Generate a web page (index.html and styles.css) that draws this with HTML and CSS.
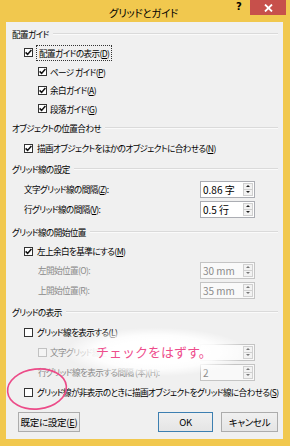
FILE: index.html
```html
<!DOCTYPE html>
<html lang="ja">
<head>
<meta charset="utf-8">
<title>グリッドとガイド</title>
<link rel="stylesheet" href="styles.css">
</head>
<body>
<div class="window">
  <div class="titlebar">
    <span class="title">グリッドとガイド</span>
    <span class="help">?</span>
    <span class="close"><svg width="9" height="8" viewBox="0 0 9 8"><path d="M1 0.5 L8 7.5 M8 0.5 L1 7.5" stroke="#fff" stroke-width="1.8"/></svg></span>
  </div>
  <div class="content">
    <div class="head h18"><span>配置ガイド</span><i class="rule"></i></div>
    <div class="row lv1 h19"><span class="box"><svg class="tick" viewBox="0 0 9 9"><path d="M1.6 4.4 L3.6 6.4 L7.4 1.9" /></svg></span><span class="focus">配置ガイドの表示(<u>D</u>)</span></div>
    <div class="row lv2 h19"><span class="box"><svg class="tick" viewBox="0 0 9 9"><path d="M1.6 4.4 L3.6 6.4 L7.4 1.9" /></svg></span><span>ページ ガイド(<u>P</u>)</span></div>
    <div class="row lv2 h18"><span class="box"><svg class="tick" viewBox="0 0 9 9"><path d="M1.6 4.4 L3.6 6.4 L7.4 1.9" /></svg></span><span>余白ガイド(<u>A</u>)</span></div>
    <div class="row lv2 h19"><span class="box"><svg class="tick" viewBox="0 0 9 9"><path d="M1.6 4.4 L3.6 6.4 L7.4 1.9" /></svg></span><span>段落ガイド(<u>G</u>)</span></div>

    <div class="head h20"><span>オブジェクトの位置合わせ</span><i class="rule"></i></div>
    <div class="row lv1 h20"><span class="box"><svg class="tick" viewBox="0 0 9 9"><path d="M1.6 4.4 L3.6 6.4 L7.4 1.9" /></svg></span><span>描画オブジェクトをほかのオブジェクトに合わせる(<u>N</u>)</span></div>

    <div class="head h21"><span>グリッド線の設定</span><i class="rule"></i></div>
    <div class="row spin lv1t h20"><span>文字グリッド線の間隔(<u>Z</u>):</span>
      <span class="input"><span class="val">0.86 字</span><span class="btns"><i class="up"></i><i class="dn"></i></span></span></div>
    <div class="row spin lv1t h20"><span>行グリッド線の間隔(<u>V</u>):</span>
      <span class="input"><span class="val">0.5 行</span><span class="btns"><i class="up"></i><i class="dn"></i></span></span></div>

    <div class="head h20 mt3"><span>グリッド線の開始位置</span><i class="rule"></i></div>
    <div class="row lv1 h18"><span class="box"><svg class="tick" viewBox="0 0 9 9"><path d="M1.6 4.4 L3.6 6.4 L7.4 1.9" /></svg></span><span>左上余白を基準にする(<u>M</u>)</span></div>
    <div class="row spin lv2t h20 dis"><span>左開始位置(O):</span>
      <span class="input"><span class="val">30 mm</span><span class="btns"><i class="up"></i><i class="dn"></i></span></span></div>
    <div class="row spin lv2t h20 dis"><span>上開始位置(R):</span>
      <span class="input"><span class="val">35 mm</span><span class="btns"><i class="up"></i><i class="dn"></i></span></span></div>

    <div class="head h20 mt2"><span>グリッドの表示</span><i class="rule"></i></div>
    <div class="row lv1 h20"><span class="box"></span><span>グリッド線を表示する(<u>L</u>)</span></div>
    <div class="row spin lv2 h20 dis"><span class="box off"></span><span>文字グリッド線を表示する間隔 (本)(I):</span>
      <span class="input"><span class="val"></span><span class="btns"><i class="up"></i><i class="dn"></i></span></span></div>
    <div class="row spin lv2t h20 dis"><span>行グリッド線を表示する間隔 (本)(H):</span>
      <span class="input"><span class="val">2</span><span class="btns"><i class="up"></i><i class="dn"></i></span></span></div>
    <div class="row lv1 h20"><span class="box"></span><span>グリッド線が非表示のときに描画オブジェクトをグリッド線に合わせる(<u>S</u>)</span></div>

    <div class="buttons">
      <span class="btn b-default">既定に設定(<u>E</u>)</span>
      <span class="btn b-ok">OK</span>
      <span class="btn b-cancel">キャンセル</span>
    </div>
  </div>

  <div class="glow"></div>
  <div class="note">チェックをはずす。</div>
  <svg class="circle" width="66" height="48" viewBox="0 0 66 48"><ellipse cx="32" cy="23" rx="29.5" ry="20" transform="rotate(-6 32 23)" fill="none" stroke="#ec4b88" stroke-width="1.6"/></svg>
</div>
</body>
</html>
```
FILE: styles.css
```css
html, body {
  margin: 0;
  padding: 0;
  background: #f1c84e;
}
body {
  font-family: "Noto Sans CJK JP", sans-serif;
  font-size: 8.6px;
  letter-spacing: -0.6px;
  font-feature-settings: "palt";
  color: #000;
}
.window {
  position: relative;
  width: 290px;
  height: 446px;
  box-sizing: border-box;
  padding: 0 7px 7px 6px;
  display: flex;
  flex-direction: column;
  background: #f1c84e;
  overflow: hidden;
}
.titlebar {
  height: 22px;
  flex: none;
  display: flex;
  align-items: center;
  justify-content: center;
  position: relative;
}
.title {
  font-size: 10.5px;
  letter-spacing: -0.3px;
  margin-top: 3px;
  margin-left: -2px;
}
.help {
  position: absolute;
  left: 230px;
  top: 1px;
  font-family: "DejaVu Sans", sans-serif;
  font-weight: bold;
  font-size: 10px;
  letter-spacing: 0;
}
.close {
  position: absolute;
  right: -3px;
  top: 0;
  width: 36px;
  height: 15px;
  background: #c7504b;
  display: flex;
  align-items: center;
  justify-content: center;
}
.content {
  flex: 1;
  background: #f0f0f0;
  padding: 3px 5px 7px 6px;
  display: flex;
  flex-direction: column;
}
.h18 { height: 18px; }
.h19 { height: 19px; }
.h20 { height: 20px; }
.h21 { height: 21px; }
.mt2 { margin-top: 2px; }
.mt3 { margin-top: 3px; }
.head {
  display: flex;
  align-items: center;
  gap: 4px;
  flex: none;
}
.rule {
  flex: 1;
  height: 1px;
  background: #dadada;
  border-bottom: 1px solid #fafafa;
}
.row {
  display: flex;
  align-items: center;
  flex: none;
  white-space: nowrap;
}
.lv1 { padding-left: 12px; gap: 4px; }
.lv2 { padding-left: 26px; gap: 3px; }
.lv1t { padding-left: 12px; }
.lv2t { padding-left: 26px; }
.box {
  width: 9px;
  height: 9px;
  box-sizing: border-box;
  border: 1px solid #333;
  background: #fff;
  flex: none;
  position: relative;
}
.box.off {
  border-color: #c2c2c2;
  background: #f4f4f4;
}
.tick {
  position: absolute;
  left: -1px;
  top: -1px;
  width: 9px;
  height: 9px;
}
.tick path {
  fill: none;
  stroke: #111;
  stroke-width: 1.5;
}
.focus {
  outline: 1px dotted #333;
  outline-offset: 1px;
  padding: 0 1px;
  margin-left: 1px;
}
u { text-decoration: underline; text-underline-offset: 1px; }
.dis { color: #8a8a8a; }
.spin .input {
  margin-left: auto;
  margin-right: 23px;
  width: 55px;
  height: 17px;
  box-sizing: border-box;
  border: 1px solid #abadb3;
  background: #fff;
  display: flex;
  align-items: center;
  flex: none;
}
.dis .input {
  border-color: #c4c4c4;
  background: #f9f9f9;
}
.val {
  flex: 1;
  padding-left: 2px;
  font-size: 10px;
  letter-spacing: 0;
  font-feature-settings: normal;
  color: #000;
}
.dis .val { color: #8a8a8a; }
.btns {
  width: 10px;
  height: 13px;
  margin-right: 1px;
  box-sizing: border-box;
  border: 1px solid #d0d0d0;
  background: #f2f2f2;
  display: flex;
  flex-direction: column;
}
.btns i {
  flex: 1;
  display: flex;
  align-items: center;
  justify-content: center;
}
.btns i + i { border-top: 1px solid #d0d0d0; }
.btns i::before {
  content: "";
  width: 0;
  height: 0;
  border-left: 2px solid transparent;
  border-right: 2px solid transparent;
}
.btns .up::before { border-bottom: 2px solid #222; }
.btns .dn::before { border-top: 2px solid #222; }
.dis .btns .up::before { border-bottom-color: #777; }
.dis .btns .dn::before { border-top-color: #777; }
.buttons {
  margin-top: 10px;
  height: 20px;
  display: flex;
  flex: none;
}
.btn {
  height: 20px;
  box-sizing: border-box;
  border: 1px solid #acacac;
  background: linear-gradient(#f0f0f0, #e5e5e5);
  display: flex;
  align-items: center;
  justify-content: center;
  font-size: 9.5px;
  letter-spacing: -0.3px;
}
.b-default { width: 62px; margin-left: 6px; }
.b-ok { width: 55px; margin-left: auto; border-color: #3c7fb1; }
.b-cancel { width: 57px; margin-left: 8px; }
.glow {
  position: absolute;
  left: 66px;
  top: 328px;
  width: 180px;
  height: 48px;
  background: radial-gradient(ellipse at center, rgba(255,255,255,1) 35%, rgba(255,255,255,0.85) 50%, rgba(255,255,255,0) 72%);
}
.note {
  position: absolute;
  left: 96px;
  top: 343px;
  font-size: 13px;
  line-height: 18px;
  letter-spacing: 0;
  font-feature-settings: normal;
  color: #ee4d8c;
}
.circle {
  position: absolute;
  left: 5px;
  top: 366px;
}
```
